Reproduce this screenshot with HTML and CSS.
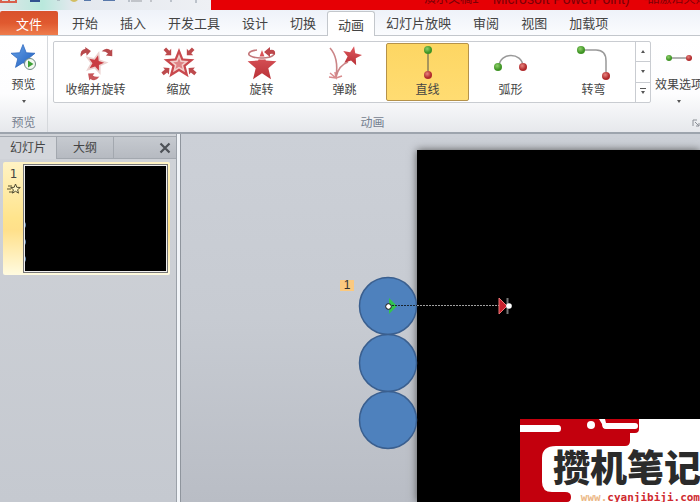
FILE: index.html
```html
<!DOCTYPE html>
<html lang="zh-CN">
  <head>
    <meta charset="utf-8">
    <meta name="viewport" content="width=device-width, initial-scale=1.0">
    <title>Microsoft PowerPoint</title>
    <link rel="stylesheet" href="styles.css">
  </head>
  <body>

    <!-- shared shapes -->
    <svg class="defs" width="0" height="0">
      <defs>
        <radialGradient id="green" cx="40%" cy="35%"><stop offset="0" stop-color="#8fd06a"/><stop offset="1" stop-color="#3f9425"/></radialGradient>
        <radialGradient id="red" cx="40%" cy="35%"><stop offset="0" stop-color="#e8837e"/><stop offset="1" stop-color="#b02a2c"/></radialGradient>
        <linearGradient id="star-red" x2="0" y2="1"><stop offset="0" stop-color="#e05a60"/><stop offset="1" stop-color="#b93238"/></linearGradient>
        <linearGradient id="star-blue" x2="1" y2="1"><stop offset="0" stop-color="#6aa5ea"/><stop offset="1" stop-color="#1d5cbc"/></linearGradient>
        <polygon id="star" points="0,-10 2.6,-3.4 9.6,-3 4.2,1.4 6,8.3 0,4.5 -6,8.3 -4.2,1.4 -9.6,-3 -2.6,-3.4"/>
        <path id="hook" d="M-5,4 Q-5,-3 1,-3 L1,-5 L6,0 L1,4 L1,1 Q-2,1 -5,4Z"/>
        <path id="arrow" d="M-5,-2 L-5,2 L0,2 L0,5 L5,0 L0,-5 L0,-2Z"/>
      </defs>
    </svg>

    <div class="app">
      <header class="titlebar">
        <div class="quick">
          <svg width="211" height="10" viewBox="0 0 211 10">
            <path d="M1 0V2H16V0M9 0V2" fill="none" stroke="#d9604c" stroke-width="2"/>
            <path d="M30 0H40V2H30Z" fill="#31518f"/>
            <path d="M57 0H60M129 0V2M171 0V2M196 0V3" stroke="#8c96a3"/>
            <path d="M70 0Q74 4 78 0Z" fill="#d3bd62"/>
            <path d="M84 0H91V1H84ZM103 0H115V1H103Z" fill="#5878aa"/>
            <path d="M131 1H142M151 0V2" stroke="#9a9da3" fill="none"/>
          </svg>
        </div>
        <div class="title"><span>演示文稿1</span><span class="app-name">Microsoft PowerPoint)</span><span>-品激活失败</span></div>
      </header>

      <nav class="tabs">
        <button class="file">文件</button>
        <button>开始</button>
        <button>插入</button>
        <button>开发工具</button>
        <button>设计</button>
        <button>切换</button>
        <button class="active">动画</button>
        <button>幻灯片放映</button>
        <button>审阅</button>
        <button>视图</button>
        <button>加载项</button>
      </nav>

      <section class="ribbon">
        <div class="group preview">
          <button class="big">
            <svg width="28" height="28" viewBox="0 0 28 28">
              <use href="#star" transform="translate(13 13) scale(1.25)" fill="url(#star-blue)" stroke="#2b66bd" stroke-width=".6"/>
              <circle cx="20" cy="20" r="5.500" fill="#f3f8f1" stroke="#718a84"/>
              <path d="M18 16.500L23.500 20L18 23.500Z" fill="#3da035"/>
            </svg>
            <span>预览</span>
            <i class="down"></i>
          </button>
          <div class="group-name">预览</div>
        </div>

        <div class="group animation">
          <div class="row">
            <div class="gallery">
              <div class="effects">
                <button class="effect">
                  <svg width="36" height="36" viewBox="0 0 36 36">
                    <use href="#star" transform="translate(18 17) rotate(15) scale(1.250)" fill="#ecd2d0"/>
                    <use href="#star" transform="translate(18 17) rotate(15) scale(.8)" fill="#c93c42"/>
                    <use href="#hook" transform="translate(7 6) rotate(-10)" fill="#b8494c"/>
                    <use href="#hook" transform="translate(30 6) rotate(45)" fill="#b8494c"/>
                    <use href="#hook" transform="translate(15 31) rotate(215)" fill="#c8565a"/>
                  </svg>
                  <span>收缩并旋转</span>
                </button>
                <button class="effect">
                  <svg width="36" height="36" viewBox="0 0 36 36">
                    <use href="#star" transform="translate(18 18) scale(1.6)" fill="#c9494e"/>
                    <use href="#star" transform="translate(18 18) scale(1)" fill="#f3cfcc"/>
                    <use href="#star" transform="translate(18 18) scale(.6)" fill="#df8486"/>
                    <g fill="#bd4a4d">
                      <use href="#arrow" transform="translate(7 6) rotate(45) scale(.9)"/>
                      <use href="#arrow" transform="translate(29 6) rotate(135) scale(.9)"/>
                      <use href="#arrow" transform="translate(5 25) rotate(-40) scale(.9)"/>
                      <use href="#arrow" transform="translate(31 25) rotate(220) scale(.9)"/>
                    </g>
                  </svg>
                  <span>缩放</span>
                </button>
                <button class="effect">
                  <svg width="36" height="36" viewBox="0 0 36 36">
                    <use href="#star" transform="translate(18 20) scale(1.5 1.6)" fill="url(#star-red)"/>
                    <path d="M13 4C4 5 2 9 9 11C16 13 29 12 30 8" fill="none" stroke="#fff" stroke-width="3"/>
                    <path d="M13 4C4 5 2 9 9 11C16 13 29 12 30 8C31 6 29 5 26 5" fill="none" stroke="#c4777a" stroke-width="1.600"/>
                    <path d="M20 6L26 1V4Q32 3 31 9Q29 7 26 8V11Z" fill="#bd464b"/>
                  </svg>
                  <span>旋转</span>
                </button>
                <button class="effect">
                  <svg width="36" height="36" viewBox="0 0 36 36">
                    <path d="M3 2Q12 12 9 31M9 31Q12 19 21 16" fill="none" stroke="#cb8587" stroke-width="1.600"/>
                    <path d="M3 27L9 32L8 26M9 32L15 30M9 32L2 31" fill="none" stroke="#d88b8d" stroke-width="1.500"/>
                    <use href="#star" transform="translate(25 10) rotate(12)" fill="url(#star-red)"/>
                  </svg>
                  <span>弹跳</span>
                </button>
                <button class="effect selected">
                  <svg width="36" height="36" viewBox="0 0 36 36">
                    <path d="M18 5V29" stroke="#8a7f58" stroke-width="1.500"/>
                    <circle cx="18" cy="4" r="4" fill="url(#green)"/><circle cx="18" cy="29" r="4" fill="url(#red)"/>
                  </svg>
                  <span>直线</span>
                </button>
                <button class="effect">
                  <svg width="36" height="36" viewBox="0 0 36 36">
                    <path d="M6 20C7 6 29 6 30 20" fill="none" stroke="#999" stroke-width="1.500"/>
                    <circle cx="5" cy="21" r="4" fill="url(#green)"/><circle cx="30" cy="21" r="4" fill="url(#red)"/>
                  </svg>
                  <span>弧形</span>
                </button>
                <button class="effect">
                  <svg width="36" height="36" viewBox="0 0 36 36">
                    <path d="M5 4H20Q30 4 30 15V30" fill="none" stroke="#999" stroke-width="1.500"/>
                    <circle cx="5" cy="4" r="4" fill="url(#green)"/><circle cx="30" cy="30" r="4" fill="url(#red)"/>
                  </svg>
                  <span>转弯</span>
                </button>
              </div>
              <div class="scroll">
                <button aria-label="Up"><i class="down up"></i></button>
                <button aria-label="Down"><i class="down"></i></button>
                <button aria-label="More"><i class="down more"></i></button>
              </div>
            </div>
            <button class="big options">
              <svg width="28" height="28" viewBox="0 0 28 28">
                <path d="M4 14H24" stroke="#999" stroke-width="1.500"/>
                <circle cx="4" cy="14" r="3" fill="url(#green)"/><circle cx="24" cy="14" r="3" fill="url(#red)"/>
              </svg>
              <span>效果选项</span>
              <i class="down"></i>
            </button>
          </div>
          <div class="foot">
            <div class="group-name">动画</div>
            <button aria-label="More options">
              <svg width="8" height="8" viewBox="0 0 8 8"><path d="M5 1H1V7M3 3L7 7M7 4V7H4" fill="none" stroke="#8c9097"/></svg>
            </button>
          </div>
        </div>
      </section>

      <main class="work">
        <aside class="panel">
          <div class="panel-tabs">
            <button class="on">幻灯片</button>
            <button>大纲</button>
            <button class="close" aria-label="Close">
              <svg width="12" height="12" viewBox="0 0 12 12"><path d="M1.500 1.500L10.500 10.500M10.500 1.500L1.500 10.500" stroke="#4d5157" stroke-width="2.200"/></svg>
            </button>
          </div>
          <div class="thumb">
            <div class="num">
              <span>1</span>
              <svg width="14" height="12" viewBox="0 0 14 12">
                <path d="M1 3H5M0 6H4M2 9H6" stroke="#56502f"/>
                <use href="#star" transform="translate(8.500 6) scale(.5)" fill="#fff6c4" stroke="#4f4a30" stroke-width="2"/>
              </svg>
            </div>
            <div class="mini">
              <svg width="4" height="40" viewBox="0 0 4 40"><path d="M0 0Q2 3 0 6M0 17Q2 20 0 23M0 34Q2 37 0 40" fill="#6a8fb8"/></svg>
            </div>
          </div>
        </aside>

        <div class="canvas">
          <div class="slide"></div>
          <svg class="shapes" width="200" height="180" viewBox="0 0 200 180">
            <g fill="#4e81bd" stroke="#3a5f8f" stroke-width="1.500">
              <circle cx="48" cy="36" r="28.500"/>
              <circle cx="48" cy="93" r="28.500"/>
              <circle cx="48" cy="150" r="28.500"/>
            </g>
            <path d="M49 28L57 36L49 44Z" fill="#31c44c"/>
            <path d="M52 35.500H77" stroke="#182430" stroke-dasharray="2 1"/>
            <path d="M77 35.500H160" stroke="#a0a0a0" stroke-dasharray="2 1"/>
            <path d="M159 28L167 36L159 44Z" fill="#c8202c" stroke="#e77"/>
            <path d="M167.500 28V44" stroke="#777" stroke-width="2"/>
            <circle cx="48.500" cy="36.500" r="2.800" fill="#fff" stroke="#111"/>
            <circle cx="169" cy="36" r="2.800" fill="#fff"/>
          </svg>
          <span class="order">1</span>
          <div class="logo">
            <svg width="180" height="83" viewBox="0 0 180 83">
              <path d="M0 0H119V10Q119 14 115 14H110V22Q110 27 105 27H36Q22 27 22 39V63Q22 73 32 73H45Q51 73 51 78Q51 83 47 83H0Z" fill="#c3000d"/>
              <path d="M0 6H38Q41 6 41 9.500Q41 13 38 13H0Z" fill="#fff"/>
              <circle cx="71" cy="6" r="4" fill="#fff"/>
              <path d="M79 0H85L86 4H115Q118 4 118 7Q118 10 115 10H86Q82 10 82 5Z" fill="#fff"/>
            </svg>
            <strong>攒机笔记</strong>
            <em><span>www.</span>cyanjibiji.com</em>
          </div>
        </div>
      </main>
    </div>

  </body>
</html>
```

FILE: styles.css
```css
* {
  box-sizing: border-box;
}

body {
  margin: 0;
  font-family: "Liberation Sans", "Noto Sans CJK SC", sans-serif;
  font-size: 12px;
  color: #444;
}

button {
  margin: 0;
  padding: 0;
  border: 0;
  background: none;
  font: inherit;
  color: inherit;
  white-space: nowrap;
}

svg {
  display: block;
}

.defs {
  position: absolute;
}

.app {
  display: flex;
  flex-direction: column;
  height: 100vh;
  overflow: hidden;
}

/* title bar */
.titlebar {
  display: flex;
  flex: none;
  height: 10px;
  overflow: hidden;
  background: #e60005;
}

.quick {
  background: linear-gradient(90deg, #dfe6e8, #b9e8dc 20%, #e4e8ee 35%, #eef0f4);
}

.title {
  display: flex;
  align-items: flex-end;
  gap: 14px;
  flex: 1;
  padding-left: 213px;
  height: 6px;
  line-height: 14px;
  white-space: nowrap;
  color: #7a0008;
}

.app-name {
  font-size: 14px;
}

/* tabs */
.tabs {
  display: flex;
  flex: none;
  height: 26px;
  font-size: 13px;
  background: linear-gradient(#eef2f9, #fbfcfe);
  border-bottom: 1px solid #c3c7cc;
}

.tabs button {
  padding: 0 11px;
}

.tabs .file {
  width: 58px;
  margin: 1px 3px 0 0;
  border-radius: 2px 2px 0 0;
  color: #fff;
  background: linear-gradient(#d9512c, #e0592f 50%, #ee7c4c);
}

.tabs .active {
  margin: 1px 0 -1px;
  padding: 0 10px;
  border: 1px solid #c3c7cc;
  border-bottom: 0;
  border-radius: 3px 3px 0 0;
  background: #fff;
}

/* ribbon */
.ribbon {
  display: flex;
  flex: none;
  height: 98px;
  overflow: hidden;
  background: linear-gradient(#fff, #fdfdfe 60%, #e6e8ec);
  border-bottom: 2px solid #9da4ad;
}

.group {
  display: flex;
  flex-direction: column;
  justify-content: space-between;
  padding-top: 5px;
}

.group-name {
  text-align: center;
  line-height: 18px;
  color: #75808f;
}

.preview {
  flex: none;
  width: 48px;
  border-right: 1px solid #d5d8dc;
}

.big {
  display: flex;
  flex-direction: column;
  align-items: center;
  padding-top: 3px;
  line-height: 26px;
}

.down {
  border: 2px solid transparent;
  border-top: 3px solid #555;
  border-bottom: 0;
}

.big .down {
  margin-top: 2px;
}

.animation {
  flex: 1;
  min-width: 0;
  padding-left: 5px;
}

.row {
  display: flex;
}

.gallery {
  display: flex;
  flex: none;
  border: 1px solid #c9ccd1;
  border-radius: 2px;
  background: #fff;
}

.effects {
  display: flex;
}

.effect {
  display: flex;
  flex-direction: column;
  align-items: center;
  width: 83px;
  height: 60px;
  padding-top: 3px;
  line-height: 16px;
  border: 1px solid transparent;
}

.effect.selected {
  margin: 1px 0;
  height: 58px;
  padding-top: 2px;
  border-color: #b5924a;
  border-radius: 2px;
  background: linear-gradient(#fdd663, #ffdc72);
}

.scroll {
  display: flex;
  flex-direction: column;
  width: 15px;
  border-left: 1px solid #c9ccd1;
}

.scroll button {
  display: flex;
  flex: 1;
  align-items: center;
  justify-content: center;
}

.scroll button + button {
  border-top: 1px solid #c9ccd1;
}

.up {
  transform: rotate(180deg);
}

.more {
  position: relative;
}

.more::before {
  content: "";
  position: absolute;
  left: -3px;
  top: -6px;
  width: 6px;
  height: 1px;
  background: #555;
}

.options {
  flex: none;
  margin-left: 4px;
}

.foot {
  display: flex;
  align-items: center;
}

.foot .group-name {
  flex: 1;
}

/* work area */
.work {
  display: flex;
  flex: 1;
  min-height: 0;
  background: #cbced4;
}

.panel {
  flex: none;
  width: 181px;
  padding-top: 2px;
  background: linear-gradient(#d0d3d8, #c5c9d0);
  border-right: 1px solid #8f959d;
  box-shadow: inset -3px 0 #f1f4f8, inset -4px 0 #9ba1a9;
}

.panel-tabs {
  display: flex;
  height: 23px;
  margin-right: 4px;
  border: solid #a3a8af;
  border-width: 1px 0;
  line-height: 20px;
  background: linear-gradient(#c6cad0, #b6bac1);
}

.panel-tabs button {
  width: 57px;
  border-right: 1px solid #a3a8af;
}

.panel-tabs .on {
  margin-bottom: -1px;
  background: #d3d6db;
}

.panel-tabs .close {
  display: flex;
  flex: 1;
  align-items: center;
  justify-content: flex-end;
  padding-right: 5px;
  border: 0;
}

.thumb {
  display: flex;
  width: 167px;
  height: 113px;
  margin: 3px 0 0 3px;
  padding: 3px 3px 3px 0;
  border-radius: 2px;
  background: linear-gradient(#fff3c4, #ffe48c 50%, #ffe08a 60%, #fffbe0);
}

.num {
  display: flex;
  flex-direction: column;
  align-items: center;
  width: 21px;
  padding-top: 2px;
  line-height: 14px;
  font-family: "DejaVu Sans", sans-serif;
}

.num svg {
  margin-top: 2px;
}

.mini {
  display: flex;
  flex: 1;
  align-items: center;
  padding-top: 46px;
  background: #000;
  border: 1px solid #eee;
  outline: 1px solid #777;
}

.canvas {
  position: relative;
  flex: 1;
  overflow: hidden;
  background: linear-gradient(#ccd0d7, #c7cbd2 50%, #b9bdc5);
}

.slide {
  position: absolute;
  left: 236px;
  top: 16px;
  right: 0;
  bottom: 0;
  background: #000;
  box-shadow: 0 0 8px #555;
}

.shapes {
  position: absolute;
  left: 159px;
  top: 136px;
}

.order {
  position: absolute;
  left: 159px;
  top: 146px;
  width: 14px;
  line-height: 11px;
  text-align: center;
  color: #333;
  background: #fbc97f;
}

.logo {
  position: absolute;
  right: 0;
  bottom: 0;
  width: 180px;
  height: 83px;
  overflow: hidden;
  background: #fff;
}

.logo strong {
  position: absolute;
  left: 33px;
  top: 27px;
  font-size: 37px;
  font-weight: 900;
  line-height: 48px;
  white-space: nowrap;
  color: #2b2b2b;
}

.logo em {
  position: absolute;
  right: 0;
  bottom: -4px;
  font: bold 11px/16px "DejaVu Sans Mono", monospace;
  color: #cf2a2f;
}

.logo em span {
  color: #ecb987;
}
```
